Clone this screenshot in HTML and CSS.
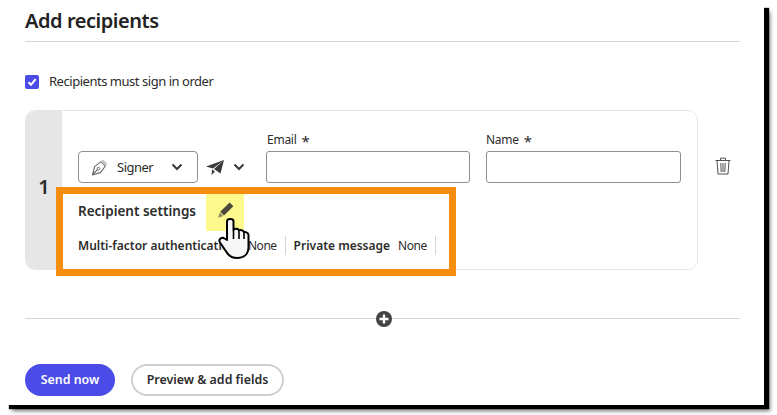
FILE: index.html
```html
<!DOCTYPE html>
<html lang="en">
<head>
<meta charset="utf-8">
<title>Add recipients</title>
<link rel="stylesheet" href="styles.css">
</head>
<body>
<main class="sheet">
  <h1 class="title">Add recipients</h1>
  <label class="order">
    <span class="checkbox">
      <svg viewBox="0 0 14 14" width="14" height="14"><path d="M3.5 7.2 6 9.8 10.6 4.2" fill="none" stroke="#fff" stroke-width="2"/></svg>
    </span>
    Recipients must sign in order
  </label>
  <div class="recipient-row">
    <section class="card">
      <div class="index">1</div>
      <div class="card-body">
        <div class="fields">
          <button class="role">
            <svg class="nib" viewBox="0 0 18 18" width="18" height="18"><path d="M1.5 17 3.6 8.6 10 3.6 14.4 8 9.4 14.6 1.5 17Z M1.5 17 6.6 11.4" fill="none" stroke="#6e6e6e" stroke-width="1.2" stroke-linejoin="round"/><circle cx="7.4" cy="10.6" r="1.3" fill="none" stroke="#6e6e6e"/><path d="M12 1.5 16.5 6 14.4 8 10 3.6Z" fill="#c4c4c4"/></svg>
            <span class="role-name">Signer</span>
            <svg class="chev" viewBox="0 0 12 8" width="12" height="8"><path d="M1.5 1.5 6 6 10.5 1.5" fill="none" stroke="#3a3a3a" stroke-width="2"/></svg>
          </button>
          <div class="delivery">
            <svg viewBox="0 0 18 15" width="18" height="15"><path d="M0 6.5 18 0 7 8.5Z M18 0 8 9 14.5 13.5Z M6 9.5 5.5 15 9 11.5Z" fill="#3a3a3a"/></svg>
            <svg class="chev" viewBox="0 0 12 8" width="12" height="8"><path d="M1.5 1.5 6 6 10.5 1.5" fill="none" stroke="#3a3a3a" stroke-width="2"/></svg>
          </div>
          <label class="field email">
            <span class="field-label">Email <b class="req">*</b></span>
            <input class="input" type="text">
          </label>
          <label class="field name">
            <span class="field-label">Name <b class="req">*</b></span>
            <input class="input" type="text">
          </label>
        </div>
        <div class="settings-head">
          <h2 class="settings-title">Recipient settings</h2>
          <button class="edit">
            <svg viewBox="0 0 18 18" width="18" height="18"><path d="M12.6 1.6 16.4 5.2 7 14.4 3.2 10.8Z" fill="#4a4a3a"/><path d="M2.7 11.6 6.3 15 1.2 16.8Z" fill="#8c8a5a"/></svg>
          </button>
        </div>
        <div class="settings-row">
          <span class="setting mfa"><b>Multi-factor authentication</b><span class="value">None</span></span>
          <span class="setting"><b>Private message</b><span class="value">None</span></span>
        </div>
      </div>
      <div class="highlight"></div>
    </section>
    <button class="trash" aria-label="Delete">
      <svg viewBox="0 0 16 18" width="16" height="18"><path d="M.5 3.5H15.5M5.5 3.2V1.2H10.5V3.2M2 3.5 3 17H13L14 3.5M5.8 6 6.2 15M8 6V15M10.2 6 9.8 15" fill="none" stroke="#505050" stroke-width="1"/></svg>
    </button>
  </div>
  <div class="divider">
    <span class="line first"></span>
    <svg viewBox="0 0 16 16" width="16" height="16"><circle cx="8" cy="8" r="8" fill="#444"/><path d="M8 3.5V12.5M3.5 8H12.5" stroke="#fff" stroke-width="2.4"/></svg>
    <span class="line"></span>
  </div>
  <div class="actions">
    <button class="btn primary">Send now</button>
    <button class="btn secondary">Preview &amp; add fields</button>
  </div>
  <svg class="cursor" viewBox="0 0 36 44" width="36" height="44"><path d="M10 23V4.5C10 1.2 16.5 1.2 16.5 4.5V13C17 11.2 21.5 11.2 22 13.6 22.6 12.6 26.8 12.8 27 15.4 27.8 14.6 31.5 15.2 31.5 18V30C31.5 37 27 41 20 41 14.5 41 11.5 38.5 9.5 35L3 25.5C1 22 5 19.5 7.5 21.5Z" fill="#f7f7f7" stroke="#000" stroke-width="2" stroke-linejoin="round"/><path d="M16.5 13V22M22 13.6V22M27 15.4V22" stroke="#000" stroke-width="1.6" fill="none"/></svg>
</main>
</body>
</html>
```
FILE: styles.css
```css
* { box-sizing: border-box; }
html, body { margin: 0; background: #fff; }
body { width: 777px; height: 415px; overflow: hidden; font-family: "Noto Sans", "Open Sans", sans-serif; color: #2c2c2c; }
button { font: inherit; color: inherit; }
.sheet { position: relative; width: 764px; height: 405px; padding: 0 24px 0 25px; background: #fff; box-shadow: 7px 6px 1px -2px #000, 9px 9px 4px -3px #777; }
.title { margin: 0; height: 42px; padding-top: 7px; font-size: 20px; line-height: 28px; font-weight: 600; letter-spacing: -.45px; color: #222; border-bottom: 1px solid #d5d5d5; }
.order { display: flex; align-items: flex-start; gap: 10px; margin-top: 33px; height: 14px; font-size: 13px; line-height: 13px; letter-spacing: -.47px; }
.checkbox { display: block; flex: none; width: 14px; height: 14px; border-radius: 2px; background: #4b4be8; }
.checkbox svg { display: block; }
.recipient-row { display: flex; align-items: flex-start; gap: 17px; margin-top: 21px; }
.card { position: relative; display: flex; width: 673px; height: 160px; border: 1px solid #e6e6e6; border-radius: 10px; overflow: visible; }
.index { display: flex; align-items: center; justify-content: center; flex: 0 0 36px; padding-bottom: 8px; background: #e6e6e6; border-radius: 9px 0 0 9px; font-size: 20px; font-weight: 600; }
.card-body { flex: 1; padding: 18px 16px 0; }
.fields { display: flex; align-items: flex-end; }
.role { display: flex; align-items: center; width: 120px; height: 32px; padding: 0 14px 0 12px; background: #fff; border: 1px solid #8e8e8e; border-radius: 4px; font-size: 13px; letter-spacing: -.5px; }
.role-name { margin-left: 8px; flex: 1; text-align: left; }
.chev { display: block; }
.delivery { display: flex; align-items: center; gap: 9px; width: 68px; height: 32px; padding-left: 8px; }
.field { display: flex; flex-direction: column; gap: 2px; }
.email { width: 204px; margin-right: 16px; }
.email .field-label { padding-left: 1px; }
.name { width: 195px; }
.field-label { height: 20px; font-size: 12px; line-height: 22px; letter-spacing: -.25px; }
.req { font-weight: 400; font-size: 15px; line-height: 1; margin-left: 2px; vertical-align: -3px; }
.input { display: block; width: 100%; height: 32px; border: 1px solid #8e8e8e; border-radius: 3px; background: #fff; }
.settings-head { display: flex; align-items: center; gap: 9px; margin-top: 11px; }
.settings-title { margin: 0; padding-bottom: 3px; font-size: 13.5px; font-weight: 600; width: 119px; white-space: nowrap; }
.edit { display: flex; align-items: center; justify-content: center; width: 38px; height: 37px; padding: 0 0 6px 2px; border: 0; background: #fef98c; }
.settings-row { display: flex; margin-top: 5px; height: 20px; }
.setting { display: flex; align-items: center; gap: 8px; padding-right: 8px; margin-right: 8px; border-right: 1px solid #d5d5d5; font-size: 12px; line-height: 21px; white-space: nowrap; height: 19px; }
.setting b { font-weight: 600; }
.value { letter-spacing: -.5px; }
.mfa b { width: 162px; }
.highlight { position: absolute; left: 30px; top: 76px; width: 400px; height: 89px; border: 7px solid #f68d0f; }
.trash { display: block; margin-top: 47px; padding: 0; border: 0; background: none; }
.trash svg { display: block; }
.divider { display: flex; align-items: center; margin-top: 41px; height: 16px; }
.line { flex: 1; height: 1px; background: #d5d5d5; margin-top: -1px; }
.line.first { flex: 0 0 351px; }
.divider svg { display: block; flex: none; }
.actions { display: flex; gap: 16px; margin-top: 37px; }
.btn { height: 32px; border-radius: 16px; font-size: 12.4px; font-weight: 600; padding: 0 0 2px; }
.primary { width: 90px; border: 0; background: #4b4be8; color: #fff; }
.secondary { width: 153px; border: 2px solid #cfcfcf; background: #fff; }
.cursor { position: absolute; left: 217px; top: 217px; }
```
